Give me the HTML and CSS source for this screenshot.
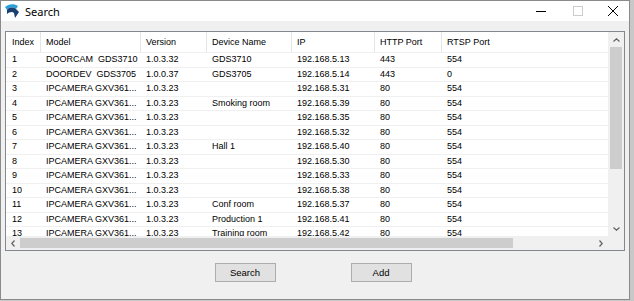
FILE: index.html
```html
<!DOCTYPE html>
<html lang="en">
<head>
    <meta charset="UTF-8">
    <meta name="viewport" content="width=device-width, initial-scale=1.0">
    <title>Search</title>
    <link rel="stylesheet" href="styles.css">
</head>
<body>
    <div class="window">
        <div class="titlebar">
            <svg class="app-icon" viewBox="0 0 16 16">
                <path d="M1 4 C4 1 10 0 14 3 L12 6 C9 4 5 4 3 7 Z" fill="#2a9fd8"/>
                <path d="M3 7 C5 4 9 4 12 6 L15 9 L11 15 L10 10 C8 8 5 9 3 11 Z" fill="#1b3f6e"/>
            </svg>
            <span class="title">Search</span>
            <div class="caption">
                <span class="cap">
                    <svg width="10" height="10" viewBox="0 0 10 10"><path d="M0 5.5 H10" stroke="#000" stroke-width="1"/></svg>
                </span>
                <span class="cap">
                    <svg width="10" height="10" viewBox="0 0 10 10"><rect x="0.5" y="0.5" width="9" height="9" fill="none" stroke="#cccccc"/></svg>
                </span>
                <span class="cap cap-close">
                    <svg width="10" height="10" viewBox="0 0 10 10"><path d="M0 0 L10 10 M10 0 L0 10" stroke="#000" stroke-width="1"/></svg>
                </span>
            </div>
        </div>

        <div class="content">
            <div class="listview">
                <div class="list-area">
                    <table class="device-table">
                        <colgroup>
                            <col style="width: 35px">
                            <col style="width: 100px">
                            <col style="width: 66px">
                            <col style="width: 85px">
                            <col style="width: 83px">
                            <col style="width: 67px">
                            <col style="width: 274px">
                        </colgroup>
                        <thead>
                            <tr>
                                <th>Index</th>
                                <th>Model</th>
                                <th>Version</th>
                                <th>Device Name</th>
                                <th>IP</th>
                                <th>HTTP Port</th>
                                <th>RTSP Port</th>
                            </tr>
                        </thead>
                        <tbody id="deviceRows"></tbody>
                    </table>
                </div>
                <div class="vscroll">
                    <span class="arrow">
                        <svg width="7" height="4" viewBox="0 0 7 4"><path d="M0.5 3.5 L3.5 0.8 L6.5 3.5" fill="none" stroke="#606060" stroke-width="1.2"/></svg>
                    </span>
                    <div class="vtrack"><div class="vthumb"></div></div>
                    <span class="arrow">
                        <svg width="7" height="4" viewBox="0 0 7 4"><path d="M0.5 0.5 L3.5 3.2 L6.5 0.5" fill="none" stroke="#606060" stroke-width="1.2"/></svg>
                    </span>
                </div>
                <div class="hscroll">
                    <span class="arrow">
                        <svg width="4" height="7" viewBox="0 0 4 7"><path d="M3.5 0.5 L0.8 3.5 L3.5 6.5" fill="none" stroke="#606060" stroke-width="1.2"/></svg>
                    </span>
                    <div class="htrack"><div class="hthumb"></div></div>
                    <span class="arrow">
                        <svg width="4" height="7" viewBox="0 0 4 7"><path d="M0.5 0.5 L3.2 3.5 L0.5 6.5" fill="none" stroke="#606060" stroke-width="1.2"/></svg>
                    </span>
                </div>
                <div class="corner"></div>
            </div>

            <div class="actions">
                <button>Search</button>
                <button>Add</button>
            </div>
        </div>
    </div>

    <script>
        // 검색된 장치 목록
        const devices = [
            ['DOORCAM  GDS3710', '1.0.3.32', 'GDS3710', '192.168.5.13', '443', '554'],
            ['DOORDEV  GDS3705', '1.0.0.37', 'GDS3705', '192.168.5.14', '443', '0'],
            ['IPCAMERA GXV361...', '1.0.3.23', '', '192.168.5.31', '80', '554'],
            ['IPCAMERA GXV361...', '1.0.3.23', 'Smoking room', '192.168.5.39', '80', '554'],
            ['IPCAMERA GXV361...', '1.0.3.23', '', '192.168.5.35', '80', '554'],
            ['IPCAMERA GXV361...', '1.0.3.23', '', '192.168.5.32', '80', '554'],
            ['IPCAMERA GXV361...', '1.0.3.23', 'Hall 1', '192.168.5.40', '80', '554'],
            ['IPCAMERA GXV361...', '1.0.3.23', '', '192.168.5.30', '80', '554'],
            ['IPCAMERA GXV361...', '1.0.3.23', '', '192.168.5.33', '80', '554'],
            ['IPCAMERA GXV361...', '1.0.3.23', '', '192.168.5.38', '80', '554'],
            ['IPCAMERA GXV361...', '1.0.3.23', 'Conf room', '192.168.5.37', '80', '554'],
            ['IPCAMERA GXV361...', '1.0.3.23', 'Production 1', '192.168.5.41', '80', '554'],
            ['IPCAMERA GXV361...', '1.0.3.23', 'Training room', '192.168.5.42', '80', '554']
        ];

        // 표 그리기
        const tbody = document.getElementById('deviceRows');
        devices.forEach(function(device, i) {
            const tr = document.createElement('tr');
            [String(i + 1)].concat(device).forEach(function(value) {
                const td = document.createElement('td');
                td.textContent = value;
                tr.appendChild(td);
            });
            tbody.appendChild(tr);
        });
    </script>
</body>
</html>
```

FILE: styles.css
```css
body {
    margin: 0;
    background-color: #c8c8c8;
    font-family: 'Liberation Sans', Arial, sans-serif;
}

.window {
    width: 628px;
    height: 298px;
    border: 1px solid #8a8a8a;
    background-color: #f0f0f0;
    display: flex;
    flex-direction: column;
}

.titlebar {
    height: 20px;
    background-color: white;
    display: flex;
    align-items: center;
}

.app-icon {
    width: 16px;
    height: 16px;
    margin: 0 5px 0 3px;
}

.title {
    font-family: 'Noto Sans', sans-serif;
    font-size: 11px;
    color: #000;
}

.caption {
    margin-left: auto;
    display: flex;
    height: 100%;
}

.cap {
    width: 37px;
    display: flex;
    align-items: center;
    justify-content: center;
}

.cap-close {
    width: 33px;
}

.content {
    flex: 1;
    padding: 10px 4px 0 4px;
}

.listview {
    height: 218px;
    border: 1px solid #828790;
    background-color: white;
    display: grid;
    grid-template-columns: 1fr 16px;
    grid-template-rows: 1fr 14px;
}

.list-area {
    overflow: hidden;
}

.device-table {
    table-layout: fixed;
    width: 710px;
    border-collapse: collapse;
    border-spacing: 0;
    font-size: 9px;
    color: #000;
}

.device-table th {
    padding: 1px 0 0 5px;
    line-height: 19px;
    text-align: left;
    font-weight: normal;
    white-space: nowrap;
    background: linear-gradient(#e5e5e5, #e5e5e5) right / 1px 100% no-repeat;
}

.device-table td {
    padding: 1px 0 0 5px;
    line-height: 13.5px;
    white-space: pre;
    overflow: hidden;
    background: linear-gradient(#f0f0f0, #f0f0f0) top / 100% 1px no-repeat;
}

.device-table th:first-child,
.device-table td:first-child {
    padding-left: 6px;
}

.vscroll,
.hscroll {
    background-color: #f0f0f0;
    display: flex;
}

.vscroll {
    flex-direction: column;
}

.arrow {
    display: flex;
    align-items: center;
    justify-content: center;
}

.vscroll .arrow {
    height: 15px;
}

.hscroll .arrow {
    width: 14px;
}

.vtrack,
.htrack {
    flex: 1;
    display: flex;
}

.vtrack {
    padding: 0 2px;
    flex-direction: column;
}

.vthumb {
    height: 122px;
    background-color: #cdcdcd;
}

.htrack {
    padding: 2px 0;
}

.hthumb {
    width: 493px;
    background-color: #cdcdcd;
}

.corner {
    background-color: #f0f0f0;
}

.actions {
    display: flex;
    justify-content: center;
    gap: 75px;
    margin-top: 12px;
    padding-right: 4px;
}

button {
    width: 61px;
    height: 19px;
    padding: 0;
    font-family: 'Liberation Sans', Arial, sans-serif;
    font-size: 9.5px;
    color: #000;
    background-color: #e1e1e1;
    border: 1px solid #adadad;
}
```
